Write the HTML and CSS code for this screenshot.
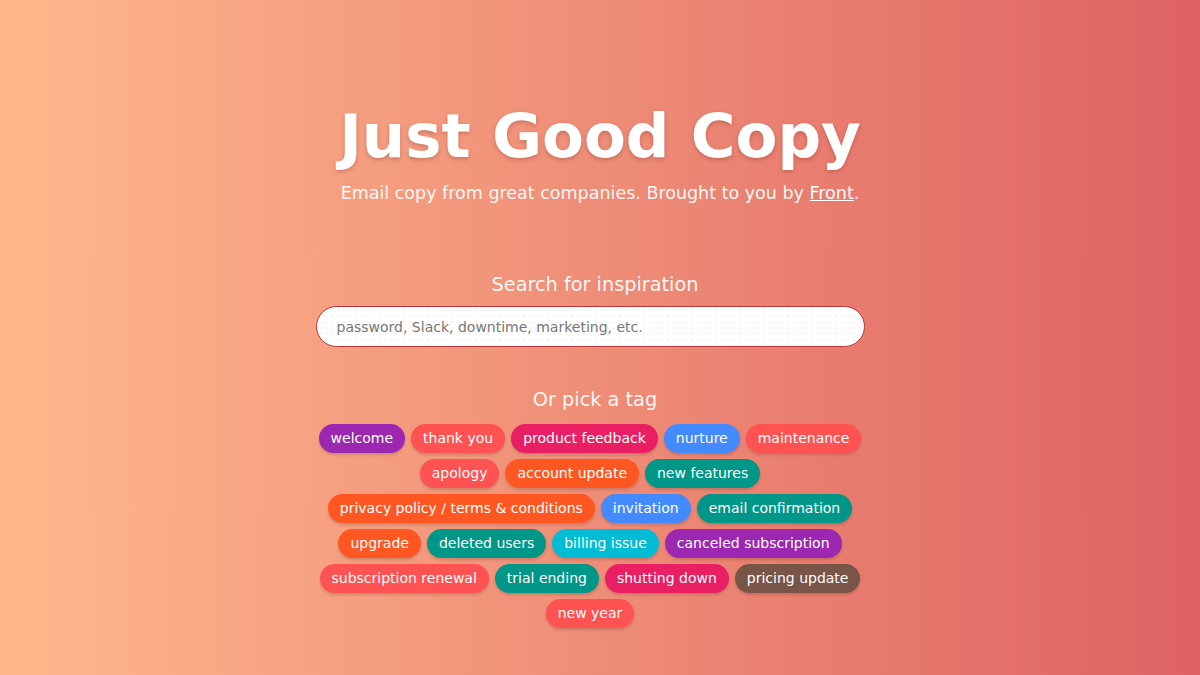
FILE: index.html
```html
<!DOCTYPE html>
<html>
<head>
<meta charset="utf-8">
<link rel="stylesheet" href="styles.css">
</head>
<body>
<main class="page">
  <header class="hero">
    <h1 class="title">Just Good Copy</h1>
    <p class="subtitle">Email copy from great companies. Brought to you by <a href="#" class="link">Front</a>.</p>
  </header>
  <section class="search">
    <h2 class="label">Search for inspiration</h2>
    <input class="search-input" type="text" placeholder="password, Slack, downtime, marketing, etc.">
  </section>
  <section class="tags-section">
    <h2 class="label">Or pick a tag</h2>
    <div class="tags">
      <span class="tag purple">welcome</span>
      <span class="tag red">thank you</span>
      <span class="tag pink">product feedback</span>
      <span class="tag blue">nurture</span>
      <span class="tag red">maintenance</span>
      <span class="tag red">apology</span>
      <span class="tag orange">account update</span>
      <span class="tag teal">new features</span>
      <span class="tag orange">privacy policy / terms &amp; conditions</span>
      <span class="tag blue">invitation</span>
      <span class="tag teal">email confirmation</span>
      <span class="tag orange">upgrade</span>
      <span class="tag teal">deleted users</span>
      <span class="tag cyan">billing issue</span>
      <span class="tag purple">canceled subscription</span>
      <span class="tag red">subscription renewal</span>
      <span class="tag teal">trial ending</span>
      <span class="tag pink">shutting down</span>
      <span class="tag brown">pricing update</span>
      <span class="tag red">new year</span>
    </div>
  </section>
</main>
</body>
</html>
```

FILE: styles.css
```css
html, body {
  margin: 0;
  padding: 0;
}
body {
  width: 1200px;
  height: 675px;
  overflow: hidden;
  background: linear-gradient(to right, #ffb88c, #de6262);
  font-family: "DejaVu Sans", "Liberation Sans", sans-serif;
  color: #fff;
}
.page {
  display: flex;
  flex-direction: column;
  align-items: center;
  padding-top: 96px;
}
.hero {
  display: flex;
  flex-direction: column;
  align-items: center;
}
.title {
  margin: 0;
  font-size: 61px;
  line-height: 80px;
  font-weight: bold;
  color: #fff;
  text-shadow: 0 2px 4px rgba(120, 40, 30, 0.3);
}
.subtitle {
  margin: 5px 0 0;
  font-size: 17.5px;
  line-height: 24px;
  color: rgba(255, 255, 255, 0.95);
}
.link {
  color: #fff;
  text-decoration: underline;
}
.search {
  margin-top: 67px;
  margin-right: 20px;
  display: flex;
  flex-direction: column;
  align-items: center;
}
.label {
  margin: 0;
  font-size: 19.3px;
  line-height: 26px;
  font-weight: normal;
  color: rgba(255, 255, 255, 0.95);
}
.search .label,
.tags-section .label {
  margin-left: 10px;
}
.search-input {
  margin-top: 8px;
  box-sizing: border-box;
  width: 549px;
  height: 41px;
  border: 1px solid #b5373a;
  border-radius: 21px;
  padding: 0 20px;
  font-family: "DejaVu Sans", "Liberation Sans", sans-serif;
  font-size: 14px;
  color: #444;
  background-color: #fff;
  background-image: radial-gradient(rgba(240, 150, 150, 0.22) 0.6px, transparent 0.9px);
  background-size: 6px 6px;
  outline: none;
}
.search-input::placeholder {
  color: #777;
}
.tags-section {
  margin-top: 40px;
  margin-right: 20px;
  display: flex;
  flex-direction: column;
  align-items: center;
}
.tags {
  margin-top: 11px;
  width: 550px;
  display: flex;
  flex-wrap: wrap;
  justify-content: center;
  gap: 6px;
}
.tag {
  display: inline-block;
  height: 29px;
  line-height: 29px;
  padding: 0 12px;
  border-radius: 15px;
  font-size: 14px;
  color: #fff;
  box-shadow: 0 2px 3px rgba(0, 0, 0, 0.15);
  white-space: nowrap;
}
.purple { background: #9c27b0; }
.red { background: #ff5252; }
.pink { background: #e91e63; }
.blue { background: #448aff; }
.orange { background: #ff5722; }
.teal { background: #009688; }
.cyan { background: #00bcd4; }
.brown { background: #795548; }
```
